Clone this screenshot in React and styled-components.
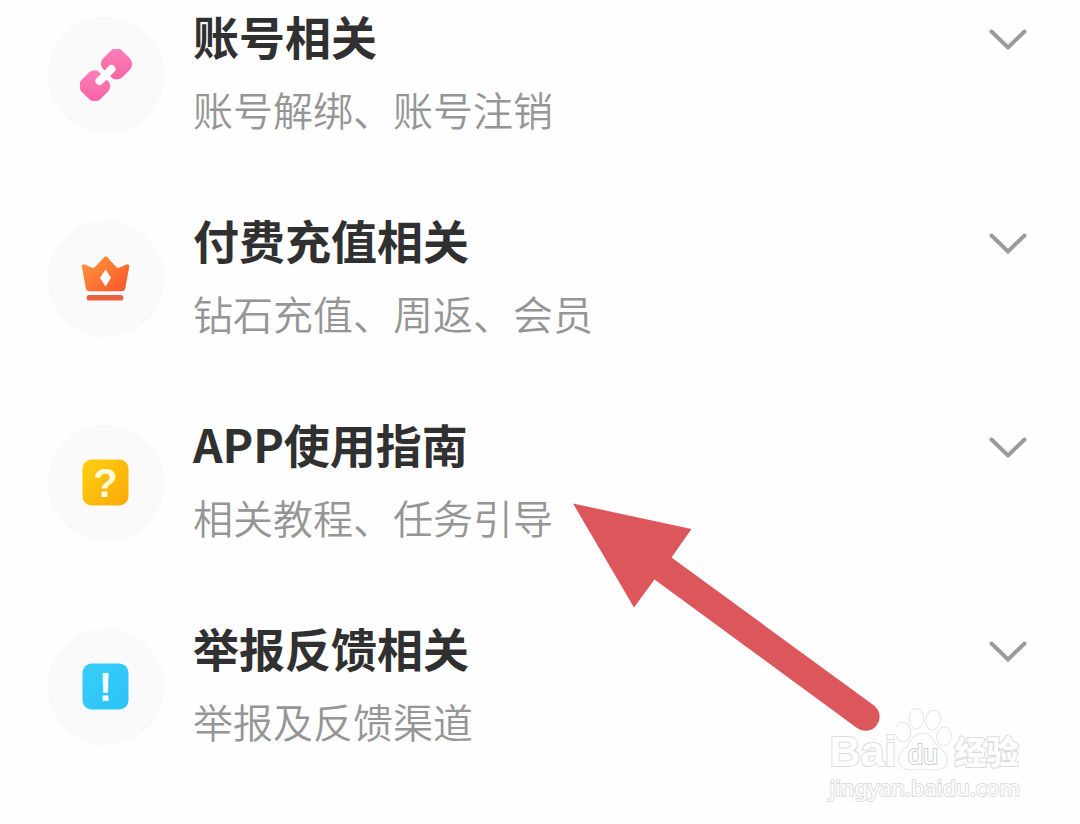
import React, { useState } from 'react';
import styled, { createGlobalStyle } from 'styled-components';

const GlobalStyle = createGlobalStyle`
  * { box-sizing: border-box; }
  body {
    margin: 0;
    background: #fefefe;
    font-family: "Noto Sans CJK SC", "Noto Sans", sans-serif;
  }
`;

const Page = styled.main`
  position: relative;
  min-height: 100vh;
  padding: 5px 0 3px;
  overflow: hidden;
`;

const List = styled.ul`
  list-style: none;
  margin: 0;
  padding: 0;
`;

const Item = styled.li`
  min-height: 204px;
`;

const Row = styled.button`
  display: flex;
  align-items: flex-start;
  gap: 29px;
  width: 100%;
  padding: 0 52px 0 48px;
  border: 0;
  background: none;
  font: inherit;
  text-align: left;
  cursor: pointer;
`;

const Badge = styled.span`
  flex: none;
  display: flex;
  align-items: center;
  justify-content: center;
  width: 116px;
  height: 116px;
  margin-top: 12px;
  border: 2px solid #f9f9f9;
  border-radius: 50%;
  background: #fafafa;
`;

const Labels = styled.span`
  flex: 1;
  display: flex;
  flex-direction: column;
  gap: 14px;
`;

const Title = styled.span`
  font-size: 46px;
  line-height: 60px;
  font-weight: 700;
  color: #303030;
`;

const Subtitle = styled.span`
  font-size: 40px;
  line-height: 60px;
  font-weight: 350;
  color: #959595;
`;

const Chevron = styled.svg`
  flex: none;
  margin-top: 22px;
`;

const Arrow = styled.svg`
  position: absolute;
  top: 502px;
  left: 572px;
  pointer-events: none;
`;

const Watermark = styled.div`
  position: absolute;
  right: 60px;
  bottom: 21px;
  display: flex;
  flex-direction: column;
  color: #fefefe;
  -webkit-text-stroke: 2px #dcdcdc;
  paint-order: stroke fill;
  white-space: nowrap;
`;

const Brand = styled.div`
  display: flex;
  align-items: flex-end;
  height: 64px;
`;

const BrandLatin = styled.span`
  font: 700 43px/40px "Liberation Sans", sans-serif;
`;

const BrandHan = styled.span`
  font-size: 32px;
  line-height: 42px;
  font-weight: 900;
`;

const Site = styled.div`
  font: 400 22px/32px "Noto Sans", sans-serif;
`;

function LinkIcon() {
  return (
    <svg width="52" height="52" viewBox="0 0 52 52" aria-hidden="true">
      <defs>
        <linearGradient id="pink" x1="0" y1="0" x2="1" y2="1">
          <stop offset="0" stopColor="#f884bb" />
          <stop offset="1" stopColor="#fb5ea3" />
        </linearGradient>
      </defs>
      <rect x="23" y="1.500" width="27" height="27" rx="8.500" transform="rotate(45 36.500 15)" fill="url(#pink)" />
      <rect x="1.300" y="23.200" width="27" height="27" rx="8.500" transform="rotate(45 14.800 36.700)" fill="url(#pink)" />
      <path d="M16 16.500 L35 35.500" stroke="#fafafa" strokeWidth="5" />
      <path d="M19.500 32 L31.500 20" stroke="#fff" strokeWidth="8" strokeLinecap="round" />
    </svg>
  );
}

function CrownIcon() {
  return (
    <svg width="52" height="52" viewBox="0 0 52 52" aria-hidden="true">
      <defs>
        <linearGradient id="orange" x1="0" y1="0" x2="1" y2="1">
          <stop offset="0" stopColor="#ff9a3c" />
          <stop offset="1" stopColor="#f9532c" />
        </linearGradient>
      </defs>
      <path
        d="M24 4.200 Q25.700 2.400 27.400 4.200 L36.500 14.200 Q37.800 15.500 39.500 14.600 L46.500 11.400 Q49.800 10.800 49.200 14 L45.400 35 Q44.700 38.200 41.500 38.200 H9.700 Q6.500 38.200 5.900 35 L1.900 14 Q1.500 10.800 4.700 11.400 L11.800 14.600 Q13.500 15.500 14.800 14.200 Z"
        fill="url(#orange)"
      />
      <path d="M25.500 16.500 L31 24.800 L25.500 33.500 L20 24.800 Z" fill="#fff" />
      <rect x="6.700" y="42" width="36.600" height="5.600" rx="2.600" fill="#e9603c" />
    </svg>
  );
}

const SignText = styled.text`
  font: 700 40px "Liberation Sans", sans-serif;
  text-anchor: middle;
`;

function SignIcon({ id, sign, from, to, ink }) {
  return (
    <svg width="52" height="52" viewBox="0 0 52 52" aria-hidden="true">
      <defs>
        <linearGradient id={id} x1="0" y1="0" x2="1" y2="1">
          <stop offset="0" stopColor={from} />
          <stop offset="1" stopColor={to} />
        </linearGradient>
      </defs>
      <rect x="2.500" y="2.500" width="46" height="46" rx="9" fill={`url(#${id})`} />
      <SignText x="25.500" y="40" fill={ink}>{sign}</SignText>
    </svg>
  );
}

const topics = [
  { title: '账号相关', subtitle: '账号解绑、账号注销', icon: <LinkIcon /> },
  { title: '付费充值相关', subtitle: '钻石充值、周返、会员', icon: <CrownIcon /> },
  {
    title: 'APP使用指南',
    subtitle: '相关教程、任务引导',
    icon: <SignIcon id="yellow" sign="?" from="#fdcf10" to="#fda90a" ink="#fffbe0" />,
  },
  {
    title: '举报反馈相关',
    subtitle: '举报及反馈渠道',
    icon: <SignIcon id="blue" sign="!" from="#38cdf8" to="#2bc4f8" ink="#f4fdff" />,
  },
];

function Topic({ title, subtitle, icon }) {
  const [open, setOpen] = useState(false);
  return (
    <Item>
      <Row type="button" aria-expanded={open} onClick={() => setOpen(!open)}>
        <Badge>{icon}</Badge>
        <Labels>
          <Title>{title}</Title>
          <Subtitle>{subtitle}</Subtitle>
        </Labels>
        <Chevron width="40" height="26" viewBox="0 0 40 26" aria-hidden="true">
          <path d="M3.500 4.500 L20 20.500 L36.500 4.500" fill="none" stroke="#9b9b9b" strokeWidth="4" strokeLinecap="round" />
        </Chevron>
      </Row>
    </Item>
  );
}

function Paw() {
  return (
    <svg width="58" height="64" viewBox="4 0 58 64" aria-hidden="true">
      <g fill="#fefefe" stroke="#dedede" strokeWidth="1.500">
        <ellipse cx="11" cy="25" rx="7.500" ry="9.500" transform="rotate(-8 11 25)" />
        <ellipse cx="24.500" cy="11.500" rx="7" ry="9.800" />
        <ellipse cx="41" cy="13" rx="7" ry="9.500" transform="rotate(12 41 13)" />
        <ellipse cx="52" cy="29.500" rx="7" ry="9" transform="rotate(8 52 29.500)" />
        <path d="M31 26.500 C38 26.500 40 32 44 37.500 C49 43 55.500 46.500 55 53.500 C54.500 61.500 48 63 41 62.500 C34 61.500 28 61.500 21 62.500 C13 63 7 60 7 52 C7 45 13 43 17 37 C21 31 24 26.500 31 26.500 Z" />
      </g>
      <text x="31" y="57" textAnchor="middle" fontFamily="Liberation Sans, sans-serif" fontSize="27" fill="#fefefe" stroke="#d0d0d0" strokeWidth="2">du</text>
    </svg>
  );
}

export default function App() {
  return (
    <Page>
      <GlobalStyle />
      <List>
        {topics.map((topic) => <Topic key={topic.title} {...topic} />)}
      </List>
      <Watermark>
        <Brand>
          <BrandLatin>Bai</BrandLatin>
          <Paw />
          <BrandHan>经验</BrandHan>
        </Brand>
        <Site>jingyan.baidu.com</Site>
      </Watermark>
      <Arrow width="310" height="232" viewBox="0 0 310 232" aria-hidden="true">
        <path d="M1 1.500 L119.500 27 L99.500 55.500 L302 203.500 A14 14 0 0 1 285 226 L82.500 77.500 L62 105.500 Z" fill="#dc575c" />
      </Arrow>
    </Page>
  );
}
